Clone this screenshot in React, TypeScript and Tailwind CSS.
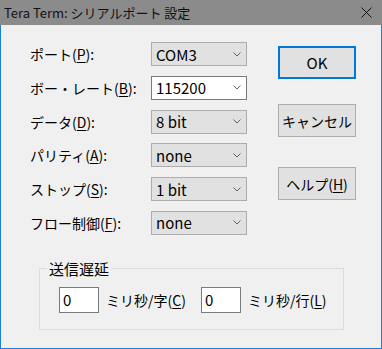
import React from 'react';

const font = { fontFamily: '"Noto Sans CJK JP", "Noto Sans", sans-serif' };

type Row = { label: string; key: string; value: string; editable?: boolean };

const rows: Row[] = [
    { label: 'ポート(', key: 'P', value: 'COM3' },
    { label: 'ボー・レート(', key: 'B', value: '115200', editable: true },
    { label: 'データ(', key: 'D', value: '8 bit' },
    { label: 'パリティ(', key: 'A', value: 'none' },
    { label: 'ストップ(', key: 'S', value: '1 bit' },
    { label: 'フロー制御(', key: 'F', value: 'none' },
];

const Chevron: React.FC = () => (
    <svg width="8" height="5" viewBox="0 0 8 5" className="shrink-0">
        <path d="M0.5 0.5 L4 4 L7.5 0.5" fill="none" stroke="#606060" strokeWidth="1" />
    </svg>
);

const Combo: React.FC<{ value: string; editable?: boolean }> = ({ value, editable }) => (
    <div
        className={
            editable
                ? 'w-[96px] h-6 flex items-center justify-between pl-[4px] pr-[5px] bg-white border border-[#7a7a7a]'
                : 'w-[96px] h-6 flex items-center justify-between pl-[4px] pr-[5px] bg-[#e1e1e1] border border-[#adadad]'
        }
    >
        <span className="text-[15px] leading-none text-black">{value}</span>
        <Chevron />
    </div>
);

const App: React.FC = () => {
    return (
        <div className="w-[382px] h-[349px] flex flex-col bg-[#f0f0f0] text-black" style={font}>
            {/* Title bar */}
            <div className="h-[25px] shrink-0 bg-[#8b8b8b] flex items-center justify-between pl-[4px] pr-[10px]">
                <span className="text-[13px] leading-none text-[#111]">Tera Term: シリアルポート 設定</span>
                <svg width="11" height="11" viewBox="0 0 11 11">
                    <path d="M0.5 0.5 L10.5 10.5 M10.5 0.5 L0.5 10.5" stroke="#111" strokeWidth="1" />
                </svg>
            </div>

            {/* Body */}
            <div className="flex-1 flex flex-col border-x border-b border-[#1a7fd6]">
                <div className="flex pt-[17px] pl-[29px]">
                    {/* Settings rows */}
                    <div className="flex flex-col gap-[9.8px]">
                        {rows.map((r) => (
                            <div key={r.key} className="h-6 flex items-center">
                                <span className="w-[121px] text-[14px] leading-none whitespace-nowrap">
                                    {r.label}
                                    <span className="underline underline-offset-2">{r.key}</span>):
                                </span>
                                <Combo value={r.value} editable={r.editable} />
                            </div>
                        ))}
                    </div>

                    {/* Buttons */}
                    <div className="flex flex-col ml-[31px] pt-[4px]">
                        <button className="w-[78px] h-[33px] bg-[#e1e1e1] border-2 border-[#0078d7] text-[15px] leading-none">
                            OK
                        </button>
                        <button className="w-[78px] h-[33px] mt-[25px] bg-[#e1e1e1] border border-[#adadad] text-[14px] leading-none">
                            キャンセル
                        </button>
                        <button className="w-[78px] h-[33px] mt-[30px] bg-[#e1e1e1] border border-[#adadad] text-[14px] leading-none">
                            ヘルプ(<span className="underline underline-offset-2">H</span>)
                        </button>
                    </div>
                </div>

                {/* Send delay group */}
                <fieldset className="ml-[38px] mt-[24px] w-[305px] border border-[#dcdcdc] px-0 pb-[16px]">
                    <legend className="ml-[7px] px-[2px] text-[15px] leading-[20px]">送信遅延</legend>
                    <div className="flex items-center pl-[19px] pt-[8px]">
                        <div className="w-[40px] h-[26px] bg-white border border-[#7a7a7a] flex items-center pl-[3px] text-[15px] leading-none">
                            0
                        </div>
                        <span className="ml-[7px] w-[95px] text-[14px] leading-none whitespace-nowrap">
                            ミリ秒/字(<span className="underline underline-offset-2">C</span>)
                        </span>
                        <div className="w-[40px] h-[26px] bg-white border border-[#7a7a7a] flex items-center pl-[3px] text-[15px] leading-none">
                            0
                        </div>
                        <span className="ml-[7px] text-[14px] leading-none whitespace-nowrap">
                            ミリ秒/行(<span className="underline underline-offset-2">L</span>)
                        </span>
                    </div>
                </fieldset>
            </div>
        </div>
    );
};

export default App;
